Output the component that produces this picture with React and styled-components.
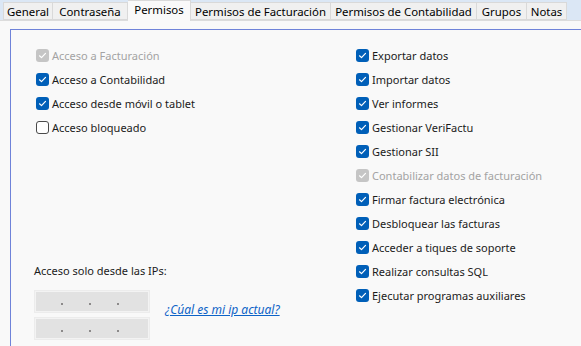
import React from 'react'
import styled, { createGlobalStyle } from 'styled-components'

const Global = createGlobalStyle`
  body {
    margin: 0;
    background: #f9f9f9;
    font-family: "Segoe UI", "Noto Sans", "Open Sans", sans-serif;
    font-size: 11px;
    color: #1b1b1b;
  }
`

const Window = styled.div`
  width: 581px;
  height: 346px;
  display: flex;
  flex-direction: column;
  overflow: hidden;
`

const TabBar = styled.div`
  display: flex;
  align-items: flex-end;
  height: 20px;
  padding-left: 3px;
  background: #dbe7f5;
  border-bottom: 1px solid #dcdcdc;
`

const Tab = styled.div`
  box-sizing: border-box;
  height: ${p => (p.active ? '21px' : '18px')};
  margin-bottom: ${p => (p.active ? '-1px' : '0')};
  width: ${p => p.w}px;
  display: flex;
  align-items: center;
  justify-content: center;
  font-size: 11.4px;
  background: ${p => (p.active ? '#f9f9f9' : '#f0f0f0')};
  border: 1px solid #d9d9d9;
  border-bottom: ${p => (p.active ? 'none' : '1px solid #d9d9d9')};
  border-left: ${p => (p.first ? '1px solid #d9d9d9' : 'none')};
  color: #000;
  white-space: nowrap;
  padding-bottom: ${p => (p.active ? '3px' : '0')};
`

const Panel = styled.div`
  flex: 1;
  display: flex;
  padding: 8px 0 0 10px;
  border-left: 2px solid #ececec;
  margin-left: -2px;
`

const Frame = styled.div`
  flex: 1;
  border-top: 1px solid #6f83d9;
  border-left: 1px solid #6f83d9;
  display: grid;
  grid-template-columns: 320px 1fr;
  padding: 13px 0 0 25px;
`

const Column = styled.div`
  display: flex;
  flex-direction: column;
`

const Row = styled.label`
  display: flex;
  align-items: center;
  gap: 3px;
  height: 24px;
  color: ${p => (p.disabled ? '#a3a3a3' : '#1b1b1b')};
  white-space: nowrap;
`

const Box = styled.span`
  box-sizing: border-box;
  width: 13px;
  height: 13px;
  border-radius: 3px;
  display: flex;
  align-items: center;
  justify-content: center;
  background: ${p => (p.state === 'on' ? '#005fb8' : p.state === 'dis' ? '#c5c5c5' : '#fff')};
  border: ${p => (p.state === 'off' ? '1px solid #4a4a4a' : 'none')};
`

const Check = ({ state }) => (
  <Box state={state}>
    {state !== 'off' && (
      <svg width="9" height="9" viewBox="0 0 9 9">
        <path d="M1.5 4.8 L3.5 6.6 L7.5 2.4" fill="none" stroke="#fff" strokeWidth="1.2" strokeLinecap="round" strokeLinejoin="round" />
      </svg>
    )}
  </Box>
)

const IpSection = styled.div`
  margin-top: 119px;
  display: flex;
  flex-direction: column;
`

const IpLabel = styled.div`
  height: 24px;
  display: flex;
  align-items: center;
  margin-left: -2px;
`

const IpArea = styled.div`
  margin-top: 9px;
  margin-left: -1px;
  display: flex;
  align-items: center;
  gap: 16px;
`

const IpList = styled.div`
  display: flex;
  flex-direction: column;
  gap: 6px;
`

const IpBox = styled.div`
  box-sizing: border-box;
  width: 114px;
  height: 21px;
  background: #e2e2e2;
  border: 1px solid #f3f3f3;
  outline: 1px solid #ececec;
  display: flex;
  align-items: center;
  padding-top: 5px;
`

const Seg = styled.span`
  width: ${p => p.w}px;
`

const Dot = styled.span`
  width: 2px;
  height: 2px;
  background: #8c8a8a;
`

const Link = styled.a`
  color: #0d63c7;
  font-size: 12px;
  font-style: italic;
  text-decoration: underline;
  margin-bottom: 11px;
`

const left = [
  ['Acceso a Facturación', 'dis'],
  ['Acceso a Contabilidad', 'on'],
  ['Acceso desde móvil o tablet', 'on'],
  ['Acceso bloqueado', 'off'],
]

const right = [
  ['Exportar datos', 'on'],
  ['Importar datos', 'on'],
  ['Ver informes', 'on'],
  ['Gestionar VeriFactu', 'on'],
  ['Gestionar SII', 'on'],
  ['Contabilizar datos de facturación', 'dis'],
  ['Firmar factura electrónica', 'on'],
  ['Desbloquear las facturas', 'on'],
  ['Acceder a tiques de soporte', 'on'],
  ['Realizar consultas SQL', 'on'],
  ['Ejecutar programas auxiliares', 'on'],
]

const tabs = [
  ['General', 50],
  ['Contraseña', 75],
  ['Permisos', 63],
  ['Permisos de Facturación', 140],
  ['Permisos de Contabilidad', 146],
  ['Grupos', 50],
  ['Notas', 40],
]

const Ip = () => (
  <IpBox>
    <Seg w={25} /><Dot /><Seg w={26} /><Dot /><Seg w={26} /><Dot />
  </IpBox>
)

const App = () => (
  <Window>
    <Global />
    <TabBar>
      {tabs.map(([t, w], i) => (
        <Tab key={t} w={w} first={i === 0} active={t === 'Permisos'}>{t}</Tab>
      ))}
    </TabBar>
    <Panel>
      <Frame>
        <Column>
          {left.map(([t, s]) => (
            <Row key={t} disabled={s === 'dis'}><Check state={s} />{t}</Row>
          ))}
          <IpSection>
            <IpLabel>Acceso solo desde las IPs:</IpLabel>
            <IpArea>
              <IpList>
                <Ip />
                <Ip />
              </IpList>
              <Link href="#">¿Cúal es mi ip actual?</Link>
            </IpArea>
          </IpSection>
        </Column>
        <Column>
          {right.map(([t, s]) => (
            <Row key={t} disabled={s === 'dis'}><Check state={s} />{t}</Row>
          ))}
        </Column>
      </Frame>
    </Panel>
  </Window>
)

export default App
